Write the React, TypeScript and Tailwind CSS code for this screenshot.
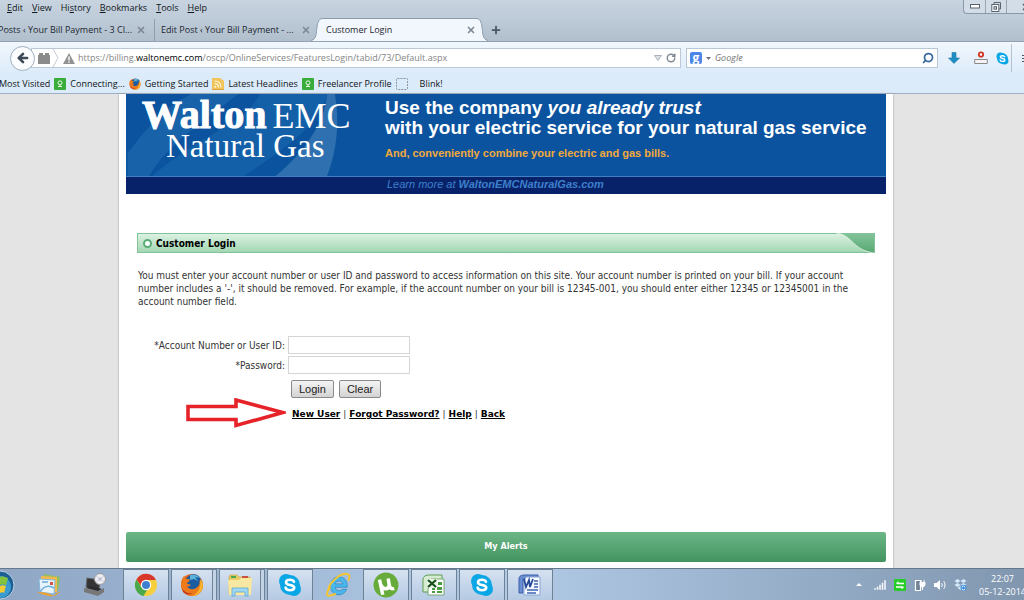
import type { ReactNode } from "react";

import { ArrowLeft, Plus, RotateCw, Search, X } from "lucide-react";

const menuItems = ["Edit", "View", "History", "Bookmarks", "Tools", "Help"];

function SkypeIcon({ className }: { className: string }) {
  return (
    <svg viewBox="0 0 24 24" className={className} aria-hidden="true">
      <circle cx="8" cy="8" r="7" fill="#0aa7e6" />
      <circle cx="16" cy="16" r="7" fill="#0aa7e6" />
      <circle cx="12" cy="12" r="10" fill="#0aa7e6" />
      <path
        d="M16 8.8C15.3 7.2 13.8 6.8 12 6.8c-2.4 0-4 1-4 2.6 0 3.6 8.2 1.6 8.2 5.2 0 1.7-1.8 2.7-4.2 2.7-2.2 0-3.9-.8-4.4-2.6"
        fill="none"
        stroke="#fff"
        strokeWidth="2.6"
        strokeLinecap="round"
      />
    </svg>
  );
}

function FirefoxIcon({ className }: { className: string }) {
  return (
    <svg viewBox="0 0 24 24" className={className} aria-hidden="true">
      <circle cx="12" cy="12" r="11" fill="#e2601a" />
      <circle cx="13.5" cy="9.5" r="8.2" fill="#1d5c9e" />
      <path d="M10 2c4-1 8 0 10 3l-5-1 3 4-4-2-4 1z" fill="#59b3dc" />
      <path
        d="M1 11C1 7 2.500 4.500 4.500 2.500c0 2 .5 3 2 3.500 2 0 3 .4 3.500 1-1 2-3 2-3 3.500 1 1 2 .5 3.500 1-.5 2-2 2-3.500 2 2 3 6 3.500 9 1.500 3-2 4-4 3.500-8 2.500 2 3.500 4 3.500 6-.5 6-5 10-11 10S1 18 1 11z"
        fill="#ee7a1c"
      />
      <path
        d="M20 6c2 2 3 4 3 6.500C22.500 18 18 23 12 23c4-2 6-4 7-7 1.500-3 1.500-7 1-10z"
        fill="#f9b52b"
      />
      <path d="M2 15c2 4 6 6 11 5-3 2-7 2-10-1z" fill="#c2391a" />
    </svg>
  );
}

function GreenBadge() {
  return (
    <svg viewBox="0 0 12 12" className="size-3 shrink-0" aria-hidden="true">
      <rect width="12" height="12" rx="1" fill="#3aac3c" />
      <circle cx="6" cy="4.800" r="2" fill="none" stroke="#e6f6e2" />
      <path d="M4 8.500h4M6 7v2" stroke="#e6f6e2" />
    </svg>
  );
}

function FeedIcon() {
  return (
    <svg viewBox="0 0 12 12" className="size-3 shrink-0" aria-hidden="true">
      <path d="M0 0h8l4 3v9H0z" fill="#f0c458" />
      <path
        d="M2.500 5.500c2.500 0 4 1.500 4 4M2.500 3c4 0 6.500 2.500 6.500 6.500"
        fill="none"
        stroke="#fff8e0"
        strokeWidth="1.200"
      />
      <circle cx="3.300" cy="8.800" r="1" fill="#fff8e0" />
      <path d="M0 11.500h12" stroke="#e0a03a" />
    </svg>
  );
}

function DashedIcon() {
  return (
    <svg viewBox="0 0 12 12" className="mr-2 size-3 shrink-0" aria-hidden="true">
      <rect
        x="0.500"
        y="0.500"
        width="11"
        height="11"
        rx="1"
        fill="none"
        stroke="#8b929a"
        strokeDasharray="2 1"
      />
    </svg>
  );
}

function WindowControls() {
  return (
    <div className="flex h-3.5 w-[73px] -mr-3 shrink-0 overflow-hidden rounded-bl border-b border-l border-[#8a98a8] bg-[#d3dde8]">
      <button aria-label="Minimize" className="flex w-[22px] items-center justify-center border-r border-[#97a4b3]">
        <svg viewBox="0 0 10 5" className="h-[5px] w-2.5">
          <rect x="0.500" y="0.500" width="9" height="3.500" fill="#fff" stroke="#59636f" />
        </svg>
      </button>
      <button aria-label="Restore" className="flex w-[21px] items-center justify-center border-r border-[#97a4b3]">
        <svg viewBox="0 0 10 10" className="size-2.5">
          <path d="M3 2V.5h6.500v6.500H8" fill="none" stroke="#59636f" />
          <rect x="0.800" y="2.500" width="7" height="7" fill="#fff" stroke="#59636f" />
          <rect x="3" y="4.700" width="2.500" height="2.500" fill="#d3dde8" stroke="#59636f" />
        </svg>
      </button>
      <button aria-label="Close window" className="flex flex-1 items-center justify-center pl-2">
        <X className="size-2.5 text-[#59636f]" strokeWidth={4} />
      </button>
    </div>
  );
}

function TabStrip() {
  return (
    <div className="flex h-6 items-end text-[9px] leading-3 text-[#1d2630]">
      <div className="flex h-[22px] w-[155px] items-center justify-between border-r border-[#8f9dac] pr-2">
        <span className="-ml-0.5 whitespace-nowrap">Posts ‹ Your Bill Payment - 3 Cl...</span>
        <X className="size-2.5 text-[#7c8793]" strokeWidth={4} />
      </div>
      <div className="flex h-[22px] w-[156px] items-center justify-between pl-1.5">
        <span className="whitespace-nowrap">Edit Post ‹ Your Bill Payment - ...</span>
        <X className="size-2.5 text-[#7c8793]" strokeWidth={4} />
      </div>
      <div className="flex h-[23px] w-[177px]">
        <svg viewBox="0 0 12 23" className="h-[23px] w-3" aria-hidden="true">
          <path d="M0 23C6 21 5 15 6 9c.6-5 2-8.500 6-8.500V23z" fill="#f1f7fd" />
          <path d="M0 22.500C6 21 5 15 6 9c.6-5 2-8.500 6-8.500" fill="none" stroke="#8c9cac" />
        </svg>
        <div className="flex flex-1 items-center justify-between border-t border-[#8c9cac] bg-[#f1f7fd] pl-[3px]">
          <span>Customer Login</span>
          <X className="size-2.5 text-[#7c8793]" strokeWidth={4} />
        </div>
        <svg viewBox="0 0 12 23" className="h-[23px] w-3" aria-hidden="true">
          <path d="M12 23C6 21 7 15 6 9C5.400 4 4 .5 0 .5V23z" fill="#f1f7fd" />
          <path d="M12 22.500C6 21 7 15 6 9C5.400 4 4 .5 0 .5" fill="none" stroke="#8c9cac" />
        </svg>
      </div>
      <button aria-label="New tab" className="flex h-[22px] items-center pl-0.5">
        <Plus className="size-3 text-[#4a5663]" strokeWidth={3.5} />
      </button>
    </div>
  );
}

function NavBar() {
  return (
    <div className="flex h-8 items-center pl-2.5">
      <button
        aria-label="Back"
        className="z-10 flex size-[25px] shrink-0 items-center justify-center rounded-full border border-[#9fafc0] bg-[#fafcfe]"
      >
        <ArrowLeft className="size-3.5 text-[#3d4956]" strokeWidth={4.5} />
      </button>
      <div className="-ml-1 flex h-5 flex-1 items-center border border-[#bac7d5] bg-white pl-1.5 pr-1">
        <svg viewBox="0 0 12 11" className="h-[11px] w-3 shrink-0" aria-hidden="true">
          <path d="M0 2h1V0h4v2h2V0h4v2h1v9H0z" fill="#8b8b8b" />
        </svg>
        <svg viewBox="0 0 7 18" className="ml-0.5 h-[18px] w-[7px] shrink-0" aria-hidden="true">
          <path d="M1 0l5 9-5 9" fill="none" stroke="#c3ccd5" />
        </svg>
        <svg viewBox="0 0 12 11" className="ml-1 h-[11px] w-3 shrink-0" aria-hidden="true">
          <path d="M6 0l6 11H0z" fill="#929292" />
          <path d="M6 3.500v4M6 8.500v1.200" stroke="#fff" strokeWidth="1.400" />
        </svg>
        <div className="ml-[3px] flex-1 whitespace-nowrap text-[9px] text-[#858585]">
          https://billing.<span className="text-black">waltonemc.com</span>
          /oscp/OnlineServices/FeaturesLogin/tabid/73/Default.aspx
        </div>
        <svg viewBox="0 0 8 6" className="mr-1 h-1.5 w-2 shrink-0" aria-hidden="true">
          <path d="M.5.5h7L4 5.500z" fill="#dfe3e7" stroke="#aab2ba" />
        </svg>
        <button aria-label="Reload">
          <RotateCw className="size-2.5 text-[#7f8a95]" strokeWidth={3.5} />
        </button>
      </div>
      <form className="ml-[5px] flex h-5 w-[252px] items-center border border-[#bac7d5] bg-white px-[3px]">
        <span className="flex size-3 shrink-0 items-center justify-center rounded-xs bg-[#4b86e8] text-[12px] leading-3 font-bold text-white">
          g
        </span>
        <svg viewBox="0 0 5 3" className="ml-1 h-[3px] w-[5px]" aria-hidden="true">
          <path d="M0 0h5L2.500 3z" fill="#6d747b" />
        </svg>
        <input
          type="text"
          aria-label="Search with Google"
          placeholder="Google"
          className="ml-1 min-w-0 flex-1 text-[9px] italic outline-none placeholder:text-[#757575]"
        />
        <button aria-label="Search">
          <Search className="size-3 -scale-x-100 text-[#39699f]" strokeWidth={3.5} />
        </button>
      </form>
      <div className="flex h-7 w-[86px] shrink-0 items-center overflow-hidden pl-2.5">
        <svg viewBox="0 0 12 12" className="size-3 shrink-0" aria-hidden="true">
          <path d="M4 .5h4V6h3.500L6 11.500.5 6H4z" fill="#1d8ec4" stroke="#2477a6" strokeWidth="0.600" />
        </svg>
        <svg viewBox="0 0 14 14" className="ml-3.5 size-3.5 shrink-0" aria-hidden="true">
          <circle cx="7" cy="3.500" r="2.200" fill="#fff" stroke="#cf3320" strokeWidth="1.800" />
          <path d="M.7 12.500V8.500H13.300v4z" fill="#f3f3f3" stroke="#8a8a8a" />
        </svg>
        <SkypeIcon className="ml-2 size-[13px] shrink-0" />
        <span className="ml-0.5 h-7 w-px shrink-0 bg-[#b4c2d0]" />
        <button aria-label="Open menu" className="ml-2.5 flex w-3 shrink-0 flex-col gap-0.5">
          <span className="h-px bg-[#4a5663]" />
          <span className="h-px bg-[#4a5663]" />
          <span className="h-px bg-[#4a5663]" />
        </button>
      </div>
    </div>
  );
}

function Bookmark({ icon, children }: { icon?: ReactNode; children: ReactNode }) {
  return (
    <a href="#" className="flex shrink-0 items-center gap-1">
      {icon}
      <span>{children}</span>
    </a>
  );
}

function BrowserChrome() {
  return (
    <header className="border-b border-[#9db0c5] bg-[#dcebfa] font-['Open_Sans','Noto_Sans',sans-serif]">
      <div className="overflow-hidden border-b border-[#93a3b3] bg-linear-to-b from-[#c8d4e0] to-[#b1bfcd]">
        <div className="flex h-[17px] justify-between">
          <nav className="flex h-4 items-center gap-[9px] pl-[7px] text-[9px] leading-3 text-[#111820]">
            {menuItems.map((item) => (
              <button key={item}>
                {item === "History" ? (
                  <>
                    Hi<u>s</u>tory
                  </>
                ) : (
                  <>
                    <u>{item[0]}</u>
                    {item.slice(1)}
                  </>
                )}
              </button>
            ))}
          </nav>
          <WindowControls />
        </div>
        <TabStrip />
      </div>
      <div className="bg-linear-to-b from-[#f1f7fd] to-[#dcebfa]">
        <NavBar />
      </div>
      <nav className="-ml-px flex h-[19px] items-center gap-1 text-[9px] leading-3 text-[#101418]">
        <Bookmark>Most Visited</Bookmark>
        <Bookmark icon={<GreenBadge />}>Connecting...</Bookmark>
        <Bookmark icon={<FirefoxIcon className="size-3" />}>Getting Started</Bookmark>
        <Bookmark icon={<FeedIcon />}>Latest Headlines</Bookmark>
        <Bookmark icon={<GreenBadge />}>Freelancer Profile</Bookmark>
        <Bookmark icon={<DashedIcon />}>Blink!</Bookmark>
      </nav>
    </header>
  );
}

function Banner() {
  return (
    <div className="font-['Liberation_Sans',Arial,sans-serif]">
      <div className="relative flex h-[83px] border-b border-[#4080c4] bg-[#0b539f]">
        <svg viewBox="0 0 240 83" className="absolute h-[82px] w-60" aria-hidden="true">
          <path d="M0 60C18 38 32 16 65 0H112C85 22 40 50 22 83H0z" fill="#1762a9" />
          <path d="M134 0C120 30 75 40 25 83H118C160 55 196 30 202 0z" fill="#1460a8" />
          <path d="M202 0c-2 30-24 60-52 83h52c10-25 13-55 8-83z" fill="#2f71b0" />
        </svg>
        <div className="relative w-[259px] shrink-0 pl-4 pt-1 font-['Liberation_Serif',serif] text-white">
          <div className="flex items-baseline gap-1.5 leading-[34px]">
            <span className="text-[40px] font-bold [-webkit-text-stroke:1px_white]">Walton</span>
            <span className="text-[36px]">EMC</span>
          </div>
          <div className="pl-6 text-[33px] leading-[26px]">Natural Gas</div>
        </div>
        <div className="relative whitespace-nowrap pt-1 font-bold">
          <p className="text-[19px] leading-5 text-white">
            Use the company <i>you already trust</i>
            <br />
            with your electric service for your natural gas service
          </p>
          <p className="pt-[7px] text-[11px] leading-4 text-[#f2a93c]">
            And, conveniently combine your electric and gas bills.
          </p>
        </div>
      </div>
      <p className="h-[17px] bg-[#08226a] pl-[261px] text-[11px] leading-3.5 text-[#3c80cc] italic">
        Learn more at <b>WaltonEMCNaturalGas.com</b>
      </p>
    </div>
  );
}

const fieldClass = "h-[18px] w-[122px] border border-[#d5d5d5] bg-white px-1 outline-none";
const buttonClass =
  "h-[18px] rounded-xs border border-[#8a8a8a] bg-linear-to-b from-[#f4f4f4] to-[#d3d3d3] px-[7px] font-['Liberation_Sans',Arial,sans-serif] text-[11px] leading-4 text-[#222]";

function LoginForm() {
  return (
    <form className="relative pt-7">
      <div className="grid grid-cols-[147px_1fr] items-center gap-x-[3px] gap-y-0.5">
        <label htmlFor="account" className="text-right">
          *Account Number or User ID:
        </label>
        <input id="account" type="text" className={fieldClass} />
        <label htmlFor="password" className="text-right">
          *Password:
        </label>
        <input id="password" type="password" className={fieldClass} />
      </div>
      <div className="flex gap-[5px] pl-[153px] pt-[6px]">
        <button type="button" className={buttonClass}>
          Login
        </button>
        <button type="reset" className={buttonClass}>
          Clear
        </button>
      </div>
      <div className="flex gap-[3px] pl-[154px] pt-2.5 font-['DejaVu_Sans',sans-serif] text-[9px] leading-3">
        <a href="#" className="font-bold text-black underline">New User</a>
        <span>|</span>
        <a href="#" className="font-bold text-black underline">Forgot Password?</a>
        <span>|</span>
        <a href="#" className="font-bold text-black underline">Help</a>
        <span>|</span>
        <a href="#" className="font-bold text-black underline">Back</a>
      </div>
      {/* pointer to the New User link */}
      <svg viewBox="0 0 100 30" className="absolute -bottom-2 left-12 h-[30px] w-[100px]" aria-hidden="true">
        <path d="M2 8.500h48V2l47 12.500L50 27.500v-6H2z" fill="#fff" stroke="#e52329" strokeWidth="3.600" />
      </svg>
    </form>
  );
}

function LoginPage() {
  return (
    <main className="flex flex-1 bg-[#e4e4e4] pl-[119px] pr-[131px]">
      <div className="flex flex-1 flex-col bg-white px-[7px] shadow-[0_0_2px_#999]">
        <Banner />
        <section className="flex-1 px-[11px] pt-[39px] pb-4 font-['DejaVu_Sans_Condensed','DejaVu_Sans',sans-serif] text-[10px] leading-[13px] text-[#333]">
          <div className="flex h-5 items-center border border-[#83c39b] bg-linear-to-b from-[#dcf1e2] to-[#a2d7b3] pl-[5px]">
            <span className="size-[9px] rounded-full border-2 border-[#5bab78] bg-white" />
            <h1 className="flex-1 pl-1 font-bold text-black">Customer Login</h1>
            <svg viewBox="0 0 38 20" className="h-5 w-[38px]" aria-hidden="true">
              <defs>
                <linearGradient id="corner" x1="0" y1="0" x2="0" y2="1">
                  <stop offset="0" stopColor="#83c49a" />
                  <stop offset="1" stopColor="#58a873" />
                </linearGradient>
              </defs>
              <path d="M0 0C17 2 16 17 38 20V0z" fill="url(#corner)" />
              <path d="M0 0C17 2 16 17 38 20" fill="none" stroke="#e3f4e8" strokeWidth="0.800" />
            </svg>
          </div>
          <div className="pl-px">
            <p className="max-w-[712px] pt-4">
              You must enter your account number or user ID and password to access information on this site. Your
              account number is printed on your bill. If your account number includes a '-', it should be removed.
              For example, if the account number on your bill is 12345-001, you should enter either 12345 or
              12345001 in the account number field.
            </p>
            <LoginForm />
          </div>
        </section>
        <footer className="mb-1.5 flex h-[30px] items-center justify-center rounded-xs bg-linear-to-b from-[#6cb687] to-[#429460] font-['DejaVu_Sans_Condensed','DejaVu_Sans',sans-serif] text-[9px] font-bold text-white">
          My Alerts
        </footer>
      </div>
    </main>
  );
}

interface TaskButtonProps {
  label: string;
  active?: boolean;
  stacked?: boolean;
  children: ReactNode;
}

function TaskButton({ label, active, stacked, children }: TaskButtonProps) {
  return (
    <button
      aria-label={label}
      className={
        active
          ? "flex h-full w-[46px] items-center justify-center border border-b-0 border-[#6f8195] bg-linear-to-b from-[#d5e1f0] to-[#b5cae3]"
          : "flex h-full w-[46px] items-center justify-center"
      }
    >
      <span className="flex flex-1 justify-center">{children}</span>
      {stacked && <span className="h-full w-1 border-l border-[#6f8195] bg-[#c3d3e6]" />}
    </button>
  );
}

function Taskbar() {
  return (
    <footer className="flex h-8 items-center border-t border-[#66788c] bg-linear-to-r from-[#8fa7c4] via-[#b1cae6] to-[#8197b0]">
      <button aria-label="Start" className="w-[26px]">
        <svg viewBox="0 0 15 30" className="h-[30px] w-[15px]">
          <circle cx="0" cy="15" r="14" fill="#1c5f93" stroke="#d9e8f5" strokeWidth="0.800" />
          <circle cx="0" cy="17" r="11" fill="#3a9bd0" />
          <path d="M0 7c2-1 5 0 8 1l-2 7c-2-1-4-1-6 0z" fill="#83c43c" />
          <path d="M0 16c2-1 4-1 6 0l-2 7c-1-1-3-1-4 0z" fill="#f4cb33" />
        </svg>
      </button>
      <TaskButton label="Windows Live Mail">
        <svg viewBox="0 0 24 24" className="size-6">
          <path d="M7 1l16 3-2 14-15-3z" fill="#8fc05f" />
          <path d="M4 3l16 1v15H4z" fill="#f3b94f" />
          <path d="M2 6l16 1-1 14-14-2z" fill="#e8f4fc" stroke="#83b6da" />
          <path d="M3 19c4-6 9-7 14-4M5 9h6" fill="none" stroke="#6cabdc" strokeWidth="1.500" />
          <path d="M0 19c8 0 12 1 16 4 2-2 5-4 7-4-4 4-7 5-11 4-4-1-8-2-12-4z" fill="#f0a230" />
          <rect x="13" y="9" width="3" height="3" fill="#d5524b" />
        </svg>
      </TaskButton>
      <TaskButton label="Device setup">
        <svg viewBox="0 0 24 24" className="size-6">
          <path d="M4 5l13 2-1 10-13-3z" fill="#343434" stroke="#666" />
          <path d="M1 15l15 3 5-3v4l-6 4-14-4z" fill="#777" />
          <path d="M3 15l12 3 4-2-12-3z" fill="#2b2b2b" />
          <circle cx="17" cy="6" r="5.500" fill="#ededf3" stroke="#999" />
          <circle cx="17" cy="6" r="1.500" fill="#9b9fb2" />
          <path d="M13 3l8 6M21 3l-8 6" stroke="#c9cadd" strokeWidth="0.800" />
        </svg>
      </TaskButton>
      <div className="flex h-full flex-1 items-center gap-0.5 pl-[5px]">
        <TaskButton label="Chrome" active>
          <svg viewBox="0 0 24 24" className="size-6">
            <circle cx="12" cy="12" r="11" fill="#f6cf3c" />
            <path d="M2.500 6.500A11 11 0 0 1 22 7H12L8 14z" fill="#d9382c" />
            <path d="M2.500 6.500L8 15l5 2-3.500 6A11 11 0 0 1 2.500 6.500z" fill="#48a84a" />
            <circle cx="12" cy="12" r="5.200" fill="#fff" />
            <circle cx="12" cy="12" r="4" fill="#3f7fd0" />
          </svg>
        </TaskButton>
        <TaskButton label="Firefox" active stacked>
          <FirefoxIcon className="size-6" />
        </TaskButton>
        <TaskButton label="Explorer" active stacked>
          <svg viewBox="0 0 26 24" className="h-6 w-[26px]">
            <path d="M2 4l1-2h7l2 2h11v17H2z" fill="#e9cc69" stroke="#c6a64a" strokeWidth="0.700" />
            <path d="M4 3h5v2H4z" fill="#49a550" />
            <path d="M15 3h6v2h-6z" fill="#c9523d" />
            <path d="M1 7h11l2-2h11l-1 17H2z" fill="#f8e8a2" />
            <path d="M5 23v-8h16v8h-3v-4H8v4z" fill="#9ed8f3" stroke="#5fa8cf" strokeWidth="0.800" />
          </svg>
        </TaskButton>
        <TaskButton label="Skype" active>
          <SkypeIcon className="size-6" />
        </TaskButton>
        <TaskButton label="Internet Explorer">
          <svg viewBox="0 0 24 24" className="size-[26px]">
            <path
              d="M20.500 14H9.500c.3 3.500 4.500 4.500 6.500 2h4c-1.300 3.200-4 5-7.300 5C8.200 21 5 17.500 5 13s3.200-8.500 7.700-8.500c5 0 8.300 3.700 7.800 9.500zM9.600 11h6.900c-.3-3.600-6.400-3.800-6.900 0z"
              fill="#4bb8ec"
              fillRule="evenodd"
              stroke="#2b85c3"
              strokeWidth="0.700"
            />
            <path
              d="M5 14c-4 5-4 8-1 8 2 0 4-1 6-2M3 16C5 8 16 0 21 2c2 .5 2 3 .5 6"
              fill="none"
              stroke="#f4c52f"
              strokeWidth="1.800"
            />
          </svg>
        </TaskButton>
        <TaskButton label="uTorrent" active>
          <svg viewBox="0 0 24 24" className="size-[26px]">
            <circle cx="12" cy="12" r="11.500" fill="#67ab3b" />
            <path
              d="M6 7l3 14M7.500 12c1 4 7 5 7.500 0L14 6M15 12c.5 3 2 4 4.500 3"
              fill="none"
              stroke="#fff"
              strokeWidth="3.200"
            />
          </svg>
        </TaskButton>
        <TaskButton label="Excel" active>
          <svg viewBox="0 0 24 24" className="size-6">
            <path d="M1 19V7c0-4 3-5 7-5h12v17z" fill="#d6ecd0" stroke="#5a9b50" />
            <path d="M9 6h13v16H6v-6z" fill="#fff" stroke="#78a873" />
            <path d="M10 14h3v3h-3zM15 14h5v3h-5zM10 18h3v2h-3zM15 18h5v2h-5zM16 9h4v3h-4z" fill="#4b9b42" />
            <rect x="5" y="6" width="10" height="9" fill="#e9f5e5" />
            <path d="M6 7l8 7M14 7l-8 7" stroke="#174f1c" strokeWidth="2.200" />
          </svg>
        </TaskButton>
        <TaskButton label="Skype" active>
          <SkypeIcon className="size-6" />
        </TaskButton>
        <TaskButton label="Word" active>
          <svg viewBox="0 0 24 24" className="size-6">
            <path d="M1 20V6c0-3 2-4 6-4h13v4H5v14z" fill="#6a8cd0" stroke="#3b5fad" />
            <path d="M8 4h14v18H6V9z" fill="#f7faff" stroke="#8ba5d1" />
            <path d="M16 8h4M16 11h4M16 14h4M9 17h11M9 20h9" stroke="#3e64b4" strokeWidth="1.300" />
            <path d="M6 6l2 8 3-7 1 7 3-8" fill="none" stroke="#274a98" strokeWidth="1.800" />
          </svg>
        </TaskButton>
      </div>
      <div className="flex items-center gap-2 text-white">
        <svg viewBox="0 0 6 3" className="mr-1 h-[3px] w-1.5" aria-hidden="true">
          <path d="M3 0l3 3H0z" fill="#fff" />
        </svg>
        <svg viewBox="0 0 12 10" className="h-2.5 w-3" aria-hidden="true">
          <path
            d="M.5 8.500h1V9.500h-1zM3 7h1v2.500H3zM5.500 5h1v4.500h-1zM8 3h1v6.500H8zM10.500.5h1v9h-1z"
            fill="#fff"
            stroke="#e9eef3"
            strokeWidth="0.700"
          />
        </svg>
        <svg viewBox="0 0 12 12" className="size-3" aria-hidden="true">
          <rect width="12" height="12" rx="1" fill="#28cc28" />
          <path d="M10 4.500H3M4.500 3L2.500 4.500 M2 8h7M7.500 9.500l2-1.500" stroke="#fff" strokeWidth="1.500" />
        </svg>
        <svg viewBox="0 0 12 12" className="size-3" aria-hidden="true">
          <path d="M1.500 1.500h5v10h-5z" fill="#728398" stroke="#fff" strokeWidth="1.200" />
          <path d="M6 3.500h5V6L9.500 8h-2L6 6zM7 1v2M10 1v2M8.500 8v3" fill="#fff" stroke="#fff" />
        </svg>
        <svg viewBox="0 0 12 12" className="size-3" aria-hidden="true">
          <path d="M0 4h2.500L6 1v10L2.500 8H0z" fill="#fff" />
          <path d="M7.500 4c1 1 1 3 0 4M9.500 2c2 2 2 6 0 8" fill="none" stroke="#fff" />
        </svg>
        <svg viewBox="0 0 13 12" className="h-3 w-[13px]" aria-hidden="true">
          <path d="M3.500 0l3 2-3 2-3-2zM9.500 0l3 2-3 2-3-2zM3.500 4l3 2-3 2-3-2zM9.500 4l3 2-3 2-3-2zM6.500 7l3 2-3 2-3-2z" fill="#d3eafb" />
          <circle cx="9.500" cy="8.800" r="3" fill="#2e83d5" />
          <path d="M8 8.500a1.500 1.500 0 0 1 3 0M11 9.500a1.500 1.500 0 0 1-3 0" fill="none" stroke="#fff" />
        </svg>
      </div>
      <time className="-mr-0.5 ml-3 whitespace-nowrap text-center font-['Open_Sans','Noto_Sans',sans-serif] text-[9px] leading-[13px] text-white">
        22:07
        <br />
        05-12-2014
      </time>
    </footer>
  );
}

export default function App() {
  return (
    <div className="flex min-h-screen flex-col overflow-x-hidden">
      <BrowserChrome />
      <LoginPage />
      <Taskbar />
    </div>
  );
}
